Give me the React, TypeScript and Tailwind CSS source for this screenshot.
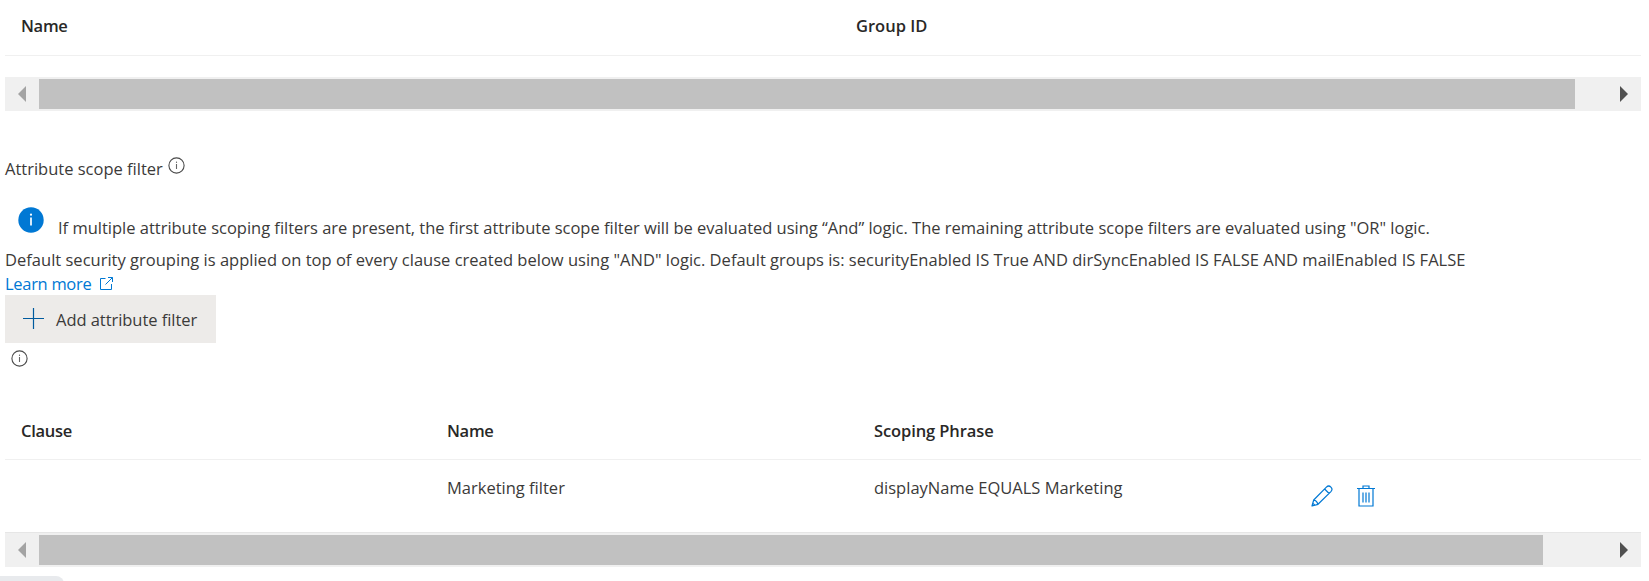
import React from "react";

function InfoOutline() {
  return (
    <svg width="17" height="17" viewBox="0 0 17 17" fill="none" className="block shrink-0">
      <circle cx="8.5" cy="8.5" r="7.6" stroke="#4a4a4a" strokeWidth="1.1" />
      <path d="M8.5 7v5" stroke="#666" strokeWidth="1.1" />
      <path d="M8.5 4.6v1.3" stroke="#666" strokeWidth="1.1" />
    </svg>
  );
}

function Scrollbar({ thumb }: { thumb: string }) {
  return (
    <div className="flex h-[34px] w-[1636px] items-center bg-[#f0f0f0]">
      <svg width="34" height="34" viewBox="0 0 34 34" className="block shrink-0">
        <path d="M13 17l8-8v16z" fill="#a3a3a3" />
      </svg>
      <div className={"h-[30px] bg-[#c1c1c1] " + thumb} />
      <svg width="34" height="34" viewBox="0 0 34 34" className="ml-auto block shrink-0">
        <path d="M21 17l-8-8v16z" fill="#505050" />
      </svg>
    </div>
  );
}

export default function App() {
  return (
    <div className="h-[581px] w-[1649px] overflow-hidden bg-white pl-[5px] font-['Open_Sans','Noto_Sans',sans-serif] text-[16.5px] leading-6 text-[#3b3a39]">
      <div className="flex h-14 w-[1636px] border-b border-[#f0f0f0] pt-[14px] pl-4 font-semibold text-[#292827]">
        <div className="w-[835px]"><span className="tracking-[-0.3px]">Name</span></div>
        <div>Group ID</div>
      </div>
      <div className="pt-[21px]"><Scrollbar thumb="w-[1536px]" /></div>

      <div className="flex h-[46px] items-start pt-[46px]">
        <span className="whitespace-nowrap">Attribute scope filter</span>
        <span className="ml-[5px]"><InfoOutline /></span>
      </div>

      <div className="mt-[50px] flex h-[39px] items-start pl-[13px]">
        <svg width="26" height="26" viewBox="0 0 26 26" className="block shrink-0">
          <circle cx="13" cy="13" r="12.7" fill="#0078d4" />
          <path d="M13 10.5v8" stroke="#fff" strokeWidth="1.7" />
          <circle cx="13" cy="7.7" r="1.1" fill="#fff" />
        </svg>
        <span className="mt-[9px] ml-[14px] whitespace-nowrap tracking-[-0.01px]">If multiple attribute scoping filters are present, the first attribute scope filter will be evaluated using “And” logic. The remaining attribute scope filters are evaluated using "OR" logic.</span>
      </div>
      <div className="mt-[2px] h-6 whitespace-nowrap tracking-[0.01px]">Default security grouping is applied on top of every clause created below using "AND" logic. Default groups is: securityEnabled IS True AND dirSyncEnabled IS FALSE AND mailEnabled IS FALSE</div>
      <div className="flex h-[23px] items-center text-[#0078d4]">
        <span className="tracking-[-0.3px]">Learn more</span>
        <svg width="13" height="13" viewBox="0 0 13 13" fill="none" stroke="#0078d4" className="ml-[9px]">
          <path d="M5.5 1.5H.5v11H11.5V7M8 .5h4.5V5M12.5.5L5.5 7.5" />
        </svg>
      </div>
      <button className="flex h-12 w-[211px] items-center bg-[#edebe9] pl-[18px]">
        <svg width="22" height="22" viewBox="0 0 22 22" className="block shrink-0">
          <path d="M10.5 0v21M0 10.5h21" stroke="#005a9e" strokeWidth="1.2" />
        </svg>
        <span className="ml-[11px] pt-[2px] tracking-[-0.05px]">Add attribute filter</span>
      </button>
      <div className="mt-[7px] h-[62px] pl-[6px]"><InfoOutline /></div>

      <div className="flex h-12 w-[1636px] border-b border-[#f0f0f0] pt-[7px] pl-4 font-semibold text-[#292827]">
        <div className="w-[426px]"><span className="tracking-[-0.3px]">Clause</span></div>
        <div className="w-[427px]"><span className="tracking-[-0.3px]">Name</span></div>
        <div><span className="tracking-[-0.1px]">Scoping Phrase</span></div>
      </div>
      <div className="flex h-[73px] w-[1636px] border-b border-[#e6e6e6] pt-4 pl-4">
        <div className="w-[426px]" />
        <div className="w-[427px]">Marketing filter</div>
        <div className="w-[437px]">displayName EQUALS Marketing</div>
        <svg width="22" height="22" viewBox="0 0 22 22" fill="none" stroke="#0078d4" strokeWidth="1.2" strokeLinejoin="round" className="mt-[9px]">
          <path d="M1 21l1.700-6L15.400 2.100q2.300-2.200 4.500 0t0 4.500L7 19.300zM2.700 15q3.300.7 4.300 4.300M13.600 4l4.500 4.500M1 21l.8-2.800 2 2z" />
        </svg>
        <svg width="18" height="22" viewBox="0 0 18 22" fill="none" stroke="#0078d4" strokeWidth="1.200" className="mt-[9px] ml-6">
          <path d="M0 3.500h18M6 3.500V1h6v2.500M2 3.500v17.500h14V3.500M6 7.500v10M9 7.500v10M12 7.500v10" />
        </svg>
      </div>
      <Scrollbar thumb="w-[1504px]" />
      <div className="mt-[9px] -ml-[5px] h-[10px] w-[64px] rounded-tr-lg bg-[#e8eaed]" />
    </div>
  );
}
